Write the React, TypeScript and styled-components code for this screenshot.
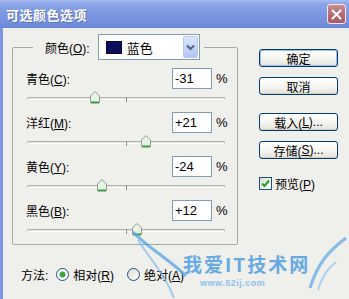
import styled, { createGlobalStyle } from "styled-components";

const sliders = [
  { label: "青色", hotkey: "C", value: -31 },
  { label: "洋红", hotkey: "M", value: 21 },
  { label: "黄色", hotkey: "Y", value: -24 },
  { label: "黑色", hotkey: "B", value: 12 },
];

const TRACK_WIDTH = 197;

const fmt = (v: number) => (v > 0 ? `+${v}` : `${v}`);

export default function App() {
  return (
    <>
      <GlobalStyle />
      <Window>
        <TitleBar>
          <Title>可选颜色选项</Title>
          <CloseButton>
            <svg width="11" height="11" viewBox="0 0 11 11">
              <path d="M1.5 1.5 L9.5 9.5 M9.5 1.5 L1.5 9.5" stroke="#fff" strokeWidth="2" strokeLinecap="round" />
            </svg>
          </CloseButton>
        </TitleBar>
        <Body>
          <Main>
            <Group>
              <Legend>
                <LegendInner>
                  <span>
                    颜色(<Key>O</Key>):
                  </span>
                  <Select>
                    <Swatch />
                    <SelectText>蓝色</SelectText>
                    <SelectArrow>
                      <svg width="9" height="7" viewBox="0 0 9 7">
                        <path d="M1 1.5 L4.5 5 L8 1.5" stroke="#4d6185" strokeWidth="2" fill="none" />
                      </svg>
                    </SelectArrow>
                  </Select>
                </LegendInner>
              </Legend>
              {sliders.map((s, i) => (
                <SliderBlock key={s.hotkey} first={i === 0}>
                  <ValueRow>
                    <span>
                      {s.label}(<Key>{s.hotkey}</Key>):
                    </span>
                    <NumberBox>{fmt(s.value)}</NumberBox>
                    <Percent>%</Percent>
                  </ValueRow>
                  <TrackArea>
                    <Track />
                    <CenterTick />
                    <Thumb style={{ left: ((s.value + 100) / 200) * TRACK_WIDTH - 5 }}>
                      <svg width="10" height="13" viewBox="0 0 10 13">
                        <path d="M0.5 5 L5 0.5 L9.5 5 L9.5 11.5 L0.5 11.5 Z" fill="#e6f5e2" stroke="#8b9b98" />
                        <path d="M1 11.5 L9 11.5" stroke="#3d9a44" strokeWidth="2" />
                      </svg>
                    </Thumb>
                  </TrackArea>
                </SliderBlock>
              ))}
            </Group>
            <Side>
              <Button primary>确定</Button>
              <Button>取消</Button>
              <Button gapTop={18}>
                载入(<Key>L</Key>)...
              </Button>
              <Button>
                存储(<Key>S</Key>)...
              </Button>
              <CheckRow>
                <CheckBox>
                  <svg width="9" height="9" viewBox="0 0 9 9">
                    <path d="M1 4.5 L3.5 7 L8 1.5" stroke="#21a121" strokeWidth="2" fill="none" />
                  </svg>
                </CheckBox>
                <span>
                  预览(<Key>P</Key>)
                </span>
              </CheckRow>
            </Side>
          </Main>
          <MethodRow>
            <span>方法:</span>
            <RadioItem>
              <Radio checked />
              <span>
                相对(<Key>R</Key>)
              </span>
            </RadioItem>
            <RadioItem>
              <Radio />
              <span>
                绝对(<Key>A</Key>)
              </span>
            </RadioItem>
          </MethodRow>
        </Body>
        <Watermark>
          <svg width="349" height="299" viewBox="0 0 349 299">
            <path d="M133 232 C148 248 168 258 186 276" stroke="#5ea8e6" strokeWidth="3" fill="none" opacity="0.8" />
            <path d="M138 240 C152 262 166 276 174 298" stroke="#7dbcec" strokeWidth="2" fill="none" opacity="0.7" />
            <path d="M346 238 C330 250 318 262 310 288" stroke="#6aaee8" strokeWidth="3" fill="none" opacity="0.8" />
            <path d="M336 262 C328 268 322 276 318 290" stroke="#8cc4ee" strokeWidth="2" fill="none" opacity="0.7" />
          </svg>
          <WaterTitle>我爱IT技术网</WaterTitle>
          <WaterUrl>www.52ij.com</WaterUrl>
        </Watermark>
      </Window>
    </>
  );
}

const GlobalStyle = createGlobalStyle`
  html, body {
    margin: 0;
    padding: 0;
    background: #efefeb;
  }
  body {
    font-family: "Liberation Sans", "Noto Sans CJK SC", sans-serif;
    font-size: 12px;
    color: #000;
  }
`;

const Window = styled.div`
  position: relative;
  width: 349px;
  height: 299px;
  display: flex;
  flex-direction: column;
  overflow: hidden;
  background: #efefeb;
`;

const TitleBar = styled.div`
  height: 28px;
  flex: none;
  display: flex;
  align-items: center;
  justify-content: space-between;
  padding: 0 3px 0 6px;
  box-sizing: border-box;
  background: linear-gradient(
    to bottom,
    #a9bcf0 0%,
    #8ea7ea 12%,
    #7d98e2 45%,
    #7590de 80%,
    #6a86d6 100%
  );
`;

const Title = styled.div`
  color: #fff;
  font-size: 13px;
  font-weight: bold;
  letter-spacing: 0.5px;
  text-shadow: 1px 1px 0 #5a70b0;
`;

const CloseButton = styled.div`
  width: 19px;
  height: 20px;
  box-sizing: border-box;
  border: 1px solid #f2e6ea;
  border-radius: 3px;
  background: linear-gradient(to bottom, #c98c90, #b2686e 60%, #a65e64);
  display: flex;
  align-items: center;
  justify-content: center;
`;

const Body = styled.div`
  flex: 1;
  display: flex;
  flex-direction: column;
  border-left: 3px solid #7d98e0;
  padding-left: 9px;
`;

const Main = styled.div`
  display: flex;
  align-items: flex-start;
`;

const Group = styled.fieldset`
  margin: 6px 0 0;
  padding: 0 9px 0 13px;
  width: 226px;
  box-sizing: border-box;
  min-width: 0;
  border: 1px solid #a9a9a2;
  border-radius: 2px;
`;

const Legend = styled.legend`
  margin-left: 7px;
  padding: 0 4px 0 12px;
`;

const LegendInner = styled.div`
  display: flex;
  align-items: center;
  gap: 8px;
`;

const Key = styled.span`
  text-decoration: underline;
`;

const Select = styled.div`
  width: 102px;
  height: 26px;
  box-sizing: border-box;
  border: 1px solid #7f9db9;
  background: #fff;
  display: flex;
  align-items: center;
  padding: 0 1px 0 7px;
`;

const Swatch = styled.div`
  width: 16px;
  height: 13px;
  background: #0c0c5c;
  border: 1px solid #060636;
  box-sizing: border-box;
`;

const SelectText = styled.span`
  margin-left: 5px;
  font-size: 13px;
  flex: 1;
`;

const SelectArrow = styled.div`
  width: 15px;
  height: 22px;
  box-sizing: border-box;
  border: 1px solid #b5c8ef;
  border-radius: 2px;
  background: linear-gradient(to bottom, #dde7fc, #c3d3f8 60%, #b3c6f2);
  display: flex;
  align-items: center;
  justify-content: center;
`;

const SliderBlock = styled.div<{ first?: boolean }>`
  margin-top: ${(p) => (p.first ? "8px" : "0")};
`;

const ValueRow = styled.div`
  height: 21px;
  display: flex;
  align-items: center;
`;

const NumberBox = styled.div`
  margin-left: auto;
  width: 40px;
  height: 21px;
  box-sizing: border-box;
  border: 1px solid #7f9db9;
  background: #fff;
  padding-left: 2px;
  font-size: 13px;
  line-height: 19px;
`;

const Percent = styled.span`
  margin-left: 4px;
  width: 12px;
  font-size: 13px;
`;

const TrackArea = styled.div`
  position: relative;
  height: 23px;
  margin: 0 3px 0 1px;
`;

const Track = styled.div`
  position: absolute;
  left: 0;
  right: 0;
  top: 8px;
  height: 3px;
  box-sizing: border-box;
  border: 1px solid #b3b3ab;
  border-bottom-color: #ffffff;
  border-radius: 2px;
  background: #e4e4de;
`;

const CenterTick = styled.div`
  position: absolute;
  left: 99px;
  top: 8px;
  width: 1px;
  height: 5px;
  background: #8e8e88;
`;

const Thumb = styled.div`
  position: absolute;
  top: 2px;
  width: 10px;
  height: 13px;
  line-height: 0;
`;

const Side = styled.div`
  margin: 21px 0 0 21px;
  width: 79px;
  display: flex;
  flex-direction: column;
`;

const Button = styled.div<{ primary?: boolean; gapTop?: number }>`
  height: 18px;
  margin-top: ${(p) => (p.gapTop ? `${p.gapTop}px` : "10px")};
  &:first-child {
    margin-top: 0;
  }
  box-sizing: border-box;
  border: 1px solid #003c74;
  border-radius: 3px;
  background: linear-gradient(to bottom, #ffffff, #f3f3ef 60%, #e3e1d8);
  box-shadow: ${(p) => (p.primary ? "inset 0 0 0 1px #9fbdf0" : "inset 0 -1px 0 #d6d0c5")};
  display: flex;
  align-items: center;
  justify-content: center;
  font-size: 12px;
`;

const CheckRow = styled.div`
  margin-top: 16px;
  display: flex;
  align-items: center;
  gap: 3px;
`;

const CheckBox = styled.div`
  width: 13px;
  height: 13px;
  box-sizing: border-box;
  border: 1px solid #1c5180;
  background: linear-gradient(135deg, #dcdcd7, #ffffff);
  display: flex;
  align-items: center;
  justify-content: center;
`;

const MethodRow = styled.div`
  margin-top: 19px;
  height: 20px;
  padding-left: 9px;
  display: flex;
  align-items: center;
  gap: 8px;
`;

const RadioItem = styled.div`
  display: flex;
  align-items: center;
  gap: 4px;
  margin-right: 5px;
`;

const Radio = styled.div<{ checked?: boolean }>`
  width: 13px;
  height: 13px;
  box-sizing: border-box;
  border: 1px solid #1c5180;
  border-radius: 50%;
  background: ${(p) =>
    p.checked
      ? "radial-gradient(circle, #3aa53a 0, #3aa53a 2.5px, #ffffff 3.5px)"
      : "linear-gradient(135deg, #dcdcd7, #ffffff)"};
`;

const Watermark = styled.div`
  position: absolute;
  inset: 0;
  pointer-events: none;
  svg {
    position: absolute;
    left: 0;
    top: 0;
  }
`;

const WaterTitle = styled.div`
  position: absolute;
  left: 183px;
  top: 254px;
  font-size: 19px;
  line-height: 19px;
  font-weight: bold;
  letter-spacing: 2px;
  color: #4f9fe2;
  opacity: 0.85;
  font-family: "Noto Sans CJK SC", sans-serif;
`;

const WaterUrl = styled.div`
  position: absolute;
  left: 200px;
  top: 279px;
  font-size: 9px;
  line-height: 9px;
  font-weight: bold;
  letter-spacing: 0.5px;
  color: #8cc3ee;
  font-family: "Liberation Sans", sans-serif;
`;
